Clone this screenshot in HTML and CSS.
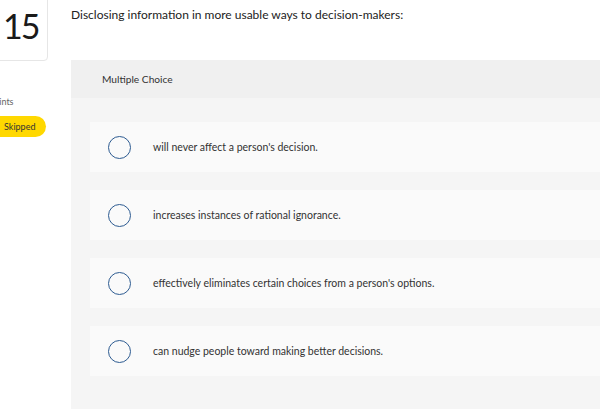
FILE: index.html
```html
<!DOCTYPE html>
<html lang="en">
  <head>
    <meta charset="UTF-8" />
    <meta name="viewport" content="width=device-width, initial-scale=1.0" />
    <title>Question 15</title>
    <link rel="stylesheet" href="styles.css">
  </head>
  <body>
    <div class="page">
      <aside class="sidebar">
        <div class="qnum">15</div>
        <div class="points">Points</div>
        <div class="status">Skipped</div>
      </aside>

      <main class="question">
        <p class="prompt">Disclosing information in more usable ways to decision-makers:</p>

        <section class="panel">
          <div class="panel-head">Multiple Choice</div>
          <div class="panel-body">
            <label class="option">
              <span class="radio"></span>
              <span class="option-text">will never affect a person's decision.</span>
            </label>
            <label class="option">
              <span class="radio"></span>
              <span class="option-text">increases instances of rational ignorance.</span>
            </label>
            <label class="option">
              <span class="radio"></span>
              <span class="option-text">effectively eliminates certain choices from a person's options.</span>
            </label>
            <label class="option">
              <span class="radio"></span>
              <span class="option-text">can nudge people toward making better decisions.</span>
            </label>
          </div>
        </section>
      </main>
    </div>
  </body>
</html>
```

FILE: styles.css
```css
html, body {
  margin: 0;
  height: 100%;
  overflow: hidden;
}
body {
  font-family: Lato, "Open Sans", Arial, sans-serif;
  color: #333;
  background-color: #fff;
}
.page {
  display: flex;
  height: 100%;
}
.sidebar {
  width: 71px;
  flex-shrink: 0;
}
.qnum {
  margin-left: -14px;
  margin-top: -10px;
  width: 62px;
  height: 71px;
  box-sizing: border-box;
  border: 1px solid #e6e6e6;
  border-radius: 4px;
  padding: 17px 0 0 16px;
  font-size: 34px;
  line-height: 36px;
  color: #1a1a1a;
  letter-spacing: -2px;
}
.points {
  margin-top: 35px;
  margin-left: -11px;
  font-size: 9px;
  color: #666;
}
.status {
  margin-top: 9px;
  margin-left: -12px;
  width: 58px;
  height: 21px;
  box-sizing: border-box;
  padding-left: 16px;
  border-radius: 11px;
  background-color: #ffd800;
  font-size: 9px;
  line-height: 21px;
  color: #333;
}
.question {
  flex: 1;
}
.prompt {
  margin: 8px 0 0;
  font-size: 12px;
  line-height: 14px;
  color: #222;
}
.panel {
  margin-top: 38px;
  height: 349px;
  background-color: #f5f5f5;
}
.panel-head {
  height: 38px;
  padding-left: 31px;
  background-color: #f0f0f0;
  font-size: 10.2px;
  line-height: 38px;
  color: #333;
}
.panel-body {
  display: flex;
  flex-direction: column;
  gap: 18px;
  padding: 24px 0 0 19px;
}
.option {
  display: flex;
  align-items: center;
  height: 50px;
  padding-left: 18px;
  background-color: #fafafa;
  cursor: pointer;
}
.radio {
  width: 23px;
  height: 23px;
  box-sizing: border-box;
  border: 1.5px solid #2d5b91;
  border-radius: 50%;
  flex-shrink: 0;
}
.option-text {
  margin-left: 22px;
  font-size: 10.5px;
  color: #333;
}
```
